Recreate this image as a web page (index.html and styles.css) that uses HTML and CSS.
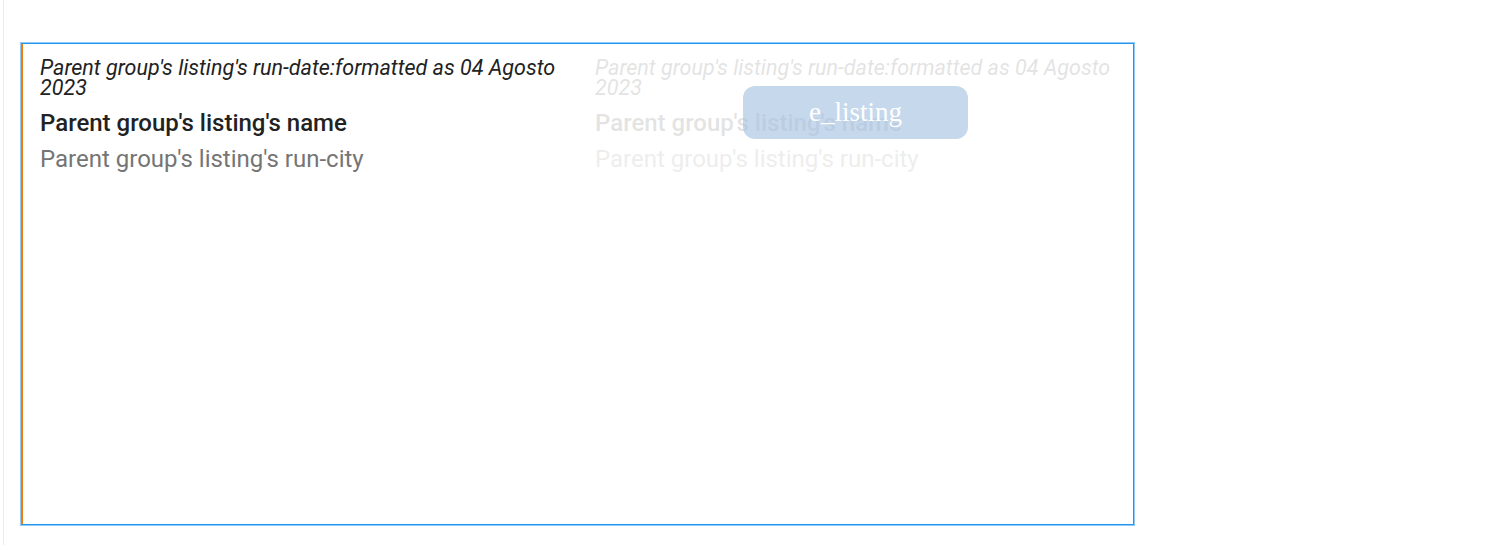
FILE: index.html
```html
<!DOCTYPE html>
<html lang="en">

<head>
  <meta charset="UTF-8" />
  <meta name="viewport" content="width=device-width, initial-scale=1.0" />
  <title>Listing preview</title>
  <link rel="stylesheet" href="styles.css">
</head>

<body>
  <div class="page">
    <div class="group">
      <div class="cell">
        <div class="run-date">Parent group's listing's run-date:formatted as 04 Agosto 2023</div>
        <div class="name">Parent group's listing's name</div>
        <div class="city">Parent group's listing's run-city</div>
      </div>
      <div class="cell ghost">
        <div class="run-date">Parent group's listing's run-date:formatted as 04 Agosto 2023</div>
        <div class="name">Parent group's listing's name</div>
        <div class="city">Parent group's listing's run-city</div>
      </div>
      <div class="tag">e_listing</div>
    </div>
  </div>
</body>

</html>
```

FILE: styles.css
```css
* {
  box-sizing: border-box;
}

body {
  margin: 0;
  background: #fff;
  font-family: Roboto, "Noto Sans", sans-serif;
}

.page {
  height: 545px;
  margin-left: 3px;
  border-left: 1px solid #ececec;
  padding: 43px 0 0 17px;
}

.group {
  position: relative;
  width: 1113px;
  height: 482px;
  border: 1px solid #2196f3;
  border-left: 2px solid #f57c00;
  outline: 1px solid #90caf9;
  display: grid;
  grid-template-columns: 1fr 1fr;
  align-items: start;
}

.cell {
  padding: 14px 10px 14px 17px;
}

.ghost {
  opacity: 0.12;
}

.run-date {
  font-style: italic;
  font-size: 21.5px;
  line-height: 20px;
  color: #222;
}

.name {
  margin-top: 11px;
  font-size: 24px;
  font-weight: 500;
  line-height: 28px;
  color: #222;
}

.city {
  margin-top: 8px;
  font-size: 24px;
  line-height: 28px;
  color: #757575;
}

.tag {
  position: absolute;
  left: 720px;
  top: 42px;
  width: 225px;
  height: 53px;
  border-radius: 12px;
  background: rgba(160, 190, 224, 0.6);
  color: #fff;
  font-family: "Liberation Serif", serif;
  font-size: 27px;
  display: flex;
  align-items: center;
  justify-content: center;
}
```
